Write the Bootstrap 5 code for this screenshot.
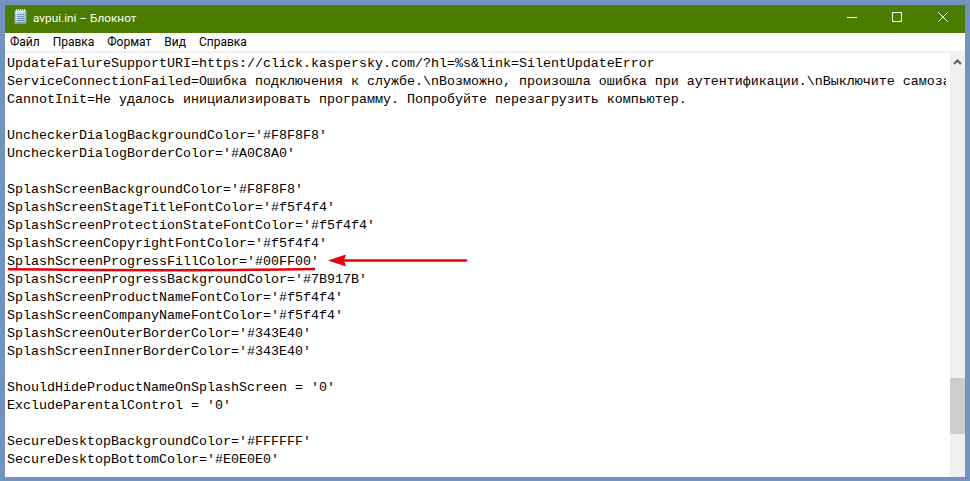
<!DOCTYPE html>
<html lang="ru"><head><meta charset="utf-8"><title>avpui.ini – Блокнот</title>
<link href="https://cdn.jsdelivr.net/npm/bootstrap@5.3.0/dist/css/bootstrap.min.css" rel="stylesheet">
<style>
html,body{height:100%;margin:0}
body{background:#7393bf;overflow:hidden}
.np-window{height:481px;padding:5px 5px 4px 5px}
.np-inner{background:#fff}
.np-title{height:28px;background:#4a7c00;color:#fff;font:11.8px/26px Roboto,"Open Sans",sans-serif}
.np-title svg{display:block}
.np-caption{margin-left:5px;padding-bottom:2px}
.np-appicon{margin-left:7px}
.np-ctl{width:45px;height:28px;padding:7px 0 0 17px}
.np-ctl-last{padding-left:18px}
.np-menu{height:18px;background:#fff;font:12px/18px Roboto,"Open Sans",sans-serif;color:#000;padding-left:5px}
.np-menu span{margin-right:13px}
.np-sep{height:2px;background:#f0f0f0}
.np-body{min-height:0}
.np-text{font:13.333px/18px "Liberation Mono",monospace;color:#000;white-space:pre;overflow:hidden;padding:2px 0 0 2px;margin:0 4px 0 0;min-width:0}
.np-scroll{width:15px;background:#f0f0f0}
.np-up{height:17px}
.np-track{height:308px}
.np-thumb{height:56px;background:#cdcdcd}
.np-mark{position:absolute;left:0;top:0;pointer-events:none}
</style></head><body>
<div class="np-window position-relative">
<div class="np-inner d-flex flex-column h-100">
<div class="np-title d-flex align-items-start">
<svg class="np-appicon mt-1" width="16" height="16" viewBox="0 0 16 16"><defs><linearGradient id="npg" x1="0" y1="0" x2="1" y2="1"><stop offset="0" stop-color="#e8f4fb"/><stop offset="1" stop-color="#7fb6d6"/></linearGradient></defs><path d="M3 1.500h11v12H3z" fill="url(#npg)" stroke="#8fa6b5"/><path d="M5 5.500h7M5 7.500h7M5 9.500h7M5 11.500h7" stroke="#6f9cbd"/><path d="M4.500 0v3M6.500 0v3M8.500 0v3M10.500 0v3M12.500 0v3" stroke="#e9eef2"/><path d="M3 14h11l1 1H1z" fill="#8d8f84"/></svg>
<span class="np-caption flex-grow-1">avpui.ini – Блокнот</span>
<div class="np-ctl"><svg width="10" height="10"><path d="M0 5.500h10" stroke="#fff"/></svg></div>
<div class="np-ctl"><svg width="10" height="10"><path d="M.5.500h9v9h-9z" fill="none" stroke="#fff"/></svg></div>
<div class="np-ctl np-ctl-last"><svg width="10" height="10"><path d="M.3.300l9.400 9.400M9.700.300L.3 9.700" stroke="#fff"/></svg></div>
</div>
<div class="np-menu"><span>Файл</span><span>Правка</span><span>Формат</span><span>Вид</span><span>Справка</span></div>
<div class="np-sep"></div>
<div class="np-body d-flex flex-grow-1">
<pre class="np-text flex-grow-1">UpdateFailureSupportURI=https://click.kaspersky.com/?hl=%s&amp;link=SilentUpdateError
ServiceConnectionFailed=Ошибка подключения к службе.\nВозможно, произошла ошибка при аутентификации.\nВыключите самоза
CannotInit=Не удалось инициализировать программу. Попробуйте перезагрузить компьютер.

UncheckerDialogBackgroundColor='#F8F8F8'
UncheckerDialogBorderColor='#A0C8A0'

SplashScreenBackgroundColor='#F8F8F8'
SplashScreenStageTitleFontColor='#f5f4f4'
SplashScreenProtectionStateFontColor='#f5f4f4'
SplashScreenCopyrightFontColor='#f5f4f4'
SplashScreenProgressFillColor='#00FF00'
SplashScreenProgressBackgroundColor='#7B917B'
SplashScreenProductNameFontColor='#f5f4f4'
SplashScreenCompanyNameFontColor='#f5f4f4'
SplashScreenOuterBorderColor='#343E40'
SplashScreenInnerBorderColor='#343E40'

ShouldHideProductNameOnSplashScreen = '0'
ExcludeParentalControl = '0'

SecureDesktopBackgroundColor='#FFFFFF'
SecureDesktopBottomColor='#E0E0E0'</pre>
<div class="np-scroll flex-shrink-0">
<div class="np-up d-flex align-items-center justify-content-center"><svg width="9" height="6"><path d="M1 5l3.500-3.500L8 5" fill="none" stroke="#606060" stroke-width="2"/></svg></div>
<div class="np-track"></div>
<div class="np-thumb"></div>
</div>
</div>
</div>
<svg class="np-mark" width="970" height="481"><path d="M8 269.300C120 270.500 220 270.500 315 269" fill="none" stroke="#e8000d" stroke-width="2.500"/><path d="M345 260.500H466" stroke="#e8000d" stroke-width="2.500" stroke-linecap="round"/><path d="M328 260.500L346 254.500L344 260.500L346 266.500z" fill="#e8000d"/></svg>
</div>
<script src="https://cdn.jsdelivr.net/npm/bootstrap@5.3.0/dist/js/bootstrap.bundle.min.js"></script>
</body></html>
